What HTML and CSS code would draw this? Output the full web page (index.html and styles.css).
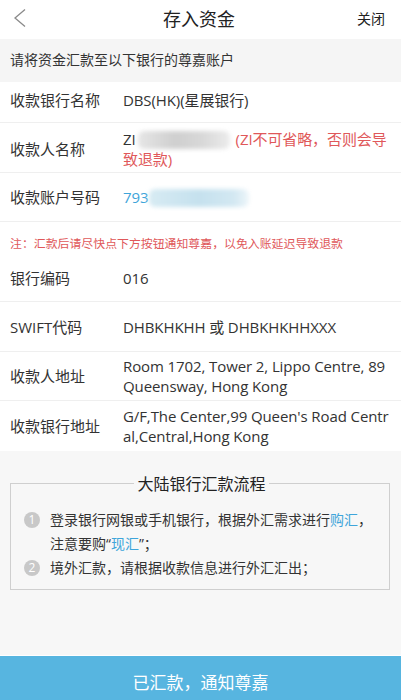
FILE: index.html
```html
<!DOCTYPE html>
<html lang="zh">
<head>
    <meta charset="utf-8"/>
    <title>存入资金</title>
    <meta name="viewport" content="width=device-width, initial-scale=1.0"/>
    <link rel="stylesheet" href="styles.css">
</head>
<body class="page">
<div class="top_bar">
    <span class="top_back">
        <svg width="14" height="20" viewBox="0 0 14 20">
            <polyline points="12,1.5 2,10 12,18.5" fill="none" stroke="#8a8a8a" stroke-width="1.3"/>
        </svg>
    </span>
    <span class="top_title">存入资金</span>
    <span class="top_close">关闭</span>
</div>
<div class="tip_bar">请将资金汇款至以下银行的尊嘉账户</div>

<div class="info_list">
    <div class="info_row row_short">
        <div class="info_label">收款银行名称</div>
        <div class="info_value">DBS(HK)(星展银行)</div>
    </div>
    <div class="info_row row_tall row_payee">
        <div class="info_label">收款人名称</div>
        <div class="info_value">ZI<span class="masked masked_gray"></span><span class="warn">(ZI不可省略，否则会导致退款)</span></div>
    </div>
    <div class="info_row row_tall">
        <div class="info_label">收款账户号码</div>
        <div class="info_value link">793<span class="masked masked_blue"></span></div>
    </div>
    <div class="info_note">注：汇款后请尽快点下方按钮通知尊嘉，以免入账延迟导致退款</div>
    <div class="info_row row_code">
        <div class="info_label">银行编码</div>
        <div class="info_value">016</div>
    </div>
    <div class="info_row row_taller">
        <div class="info_label">SWIFT代码</div>
        <div class="info_value">DHBKHKHH 或 DHBKHKHHXXX</div>
    </div>
    <div class="info_row row_tall">
        <div class="info_label">收款人地址</div>
        <div class="info_value">Room 1702, Tower 2, Lippo Centre, 89 Queensway, Hong Kong</div>
    </div>
    <div class="info_row row_taller no_line">
        <div class="info_label">收款银行地址</div>
        <div class="info_value break_all">G/F,The Center,99 Queen's Road Central,Central,Hong Kong</div>
    </div>
</div>

<div class="flow_area">
    <fieldset class="flow_box">
        <legend class="flow_title">大陆银行汇款流程</legend>
        <div class="flow_item">
            <span class="flow_num">1</span>
            <span class="flow_text">登录银行网银或手机银行，根据外汇需求进行<span class="link">购汇</span>，注意要购“<span class="link">现汇</span>”；</span>
        </div>
        <div class="flow_item">
            <span class="flow_num">2</span>
            <span class="flow_text">境外汇款，请根据收款信息进行外汇汇出；</span>
        </div>
    </fieldset>
</div>

<button class="notify_btn">已汇款，通知尊嘉</button>
</body>
</html>
```

FILE: styles.css
```css
.page {
    margin: 0;
    height: 700px;
    overflow: hidden;
    background: #fff;
    color: #333;
    font-family: "Open Sans", "Noto Sans CJK SC", sans-serif;
}

.top_bar {
    display: flex;
    align-items: center;
    justify-content: space-between;
    height: 39px;
    padding: 0 16px 3px 13px;
    box-sizing: border-box;
}

.top_back {
    display: flex;
    width: 60px;
}

.top_title {
    font-size: 18px;
    color: #222;
}

.top_close {
    width: 60px;
    text-align: right;
    font-size: 14px;
    color: #222;
}

.tip_bar {
    height: 43px;
    line-height: 41px;
    padding-left: 10px;
    background: #f5f5f5;
    font-size: 14px;
}

.info_row {
    display: flex;
    align-items: center;
    border-bottom: 1px solid #efefef;
    padding: 0 10px;
    font-size: 15px;
    line-height: 20px;
    box-sizing: border-box;
}

.row_short {
    min-height: 41px;
    padding-bottom: 4px;
}

.row_tall {
    min-height: 49px;
}

.row_payee {
    min-height: 50px;
    padding-top: 3px;
}

.row_taller {
    min-height: 50px;
}

.row_code {
    min-height: 46px;
    padding-bottom: 2px;
}

.no_line {
    border-bottom: none;
}

.info_label {
    flex: 0 0 113px;
}

.info_value {
    flex: 1;
    padding: 4px 0;
    letter-spacing: -0.1px;
}

.row_payee .info_value {
    padding: 0;
}

.break_all {
    word-break: break-all;
}

.warn {
    color: #e0585a;
}

.link {
    color: #3ea5da;
}

.masked {
    display: inline-block;
    height: 18px;
    vertical-align: middle;
    filter: blur(2px);
    border-radius: 6px;
}

.masked_gray {
    width: 92px;
    margin: 0 6px 0 2px;
    background: linear-gradient(90deg, #e6e6e6, #cfcfcf 40%, #d8d8d8 70%, #ececec);
}

.masked_blue {
    width: 100px;
    margin-left: 1px;
    background: linear-gradient(90deg, #d7ebf3, #c5e1ee 50%, #d3e8f2 85%, #eef6fa);
}

.info_note {
    height: 34px;
    padding-top: 12px;
    box-sizing: border-box;
    line-height: 18px;
    padding-left: 10px;
    font-size: 11.9px;
    color: #e0585a;
}

.flow_area {
    height: 204px;
    box-sizing: border-box;
    padding: 20px 10px 0 10px;
    background: #f7f7f7;
}

.flow_box {
    margin: 0;
    padding: 13px 10px 9px 13px;
    border: 1px solid #cfcfcf;
    width: 380px;
    box-sizing: border-box;
}

.flow_title {
    margin: 0 auto;
    padding: 0 3px;
    font-size: 16px;
    color: #222;
}

.flow_item {
    display: flex;
    align-items: flex-start;
    font-size: 14px;
    line-height: 24px;
}

.flow_num {
    flex: 0 0 auto;
    width: 16px;
    height: 16px;
    margin: 4px 10px 0 0;
    border-radius: 50%;
    background: #c8c8c8;
    color: #fff;
    font-size: 12px;
    line-height: 16px;
    text-align: center;
}

.flow_text {
    flex: 1;
}

.notify_btn {
    display: block;
    width: 100%;
    height: 52px;
    margin: 0;
    border: none;
    border-top: 1px solid #fff;
    background: #57b5e0;
    color: #fff;
    font-family: "Noto Sans CJK SC", sans-serif;
    font-size: 17px;
}
```
